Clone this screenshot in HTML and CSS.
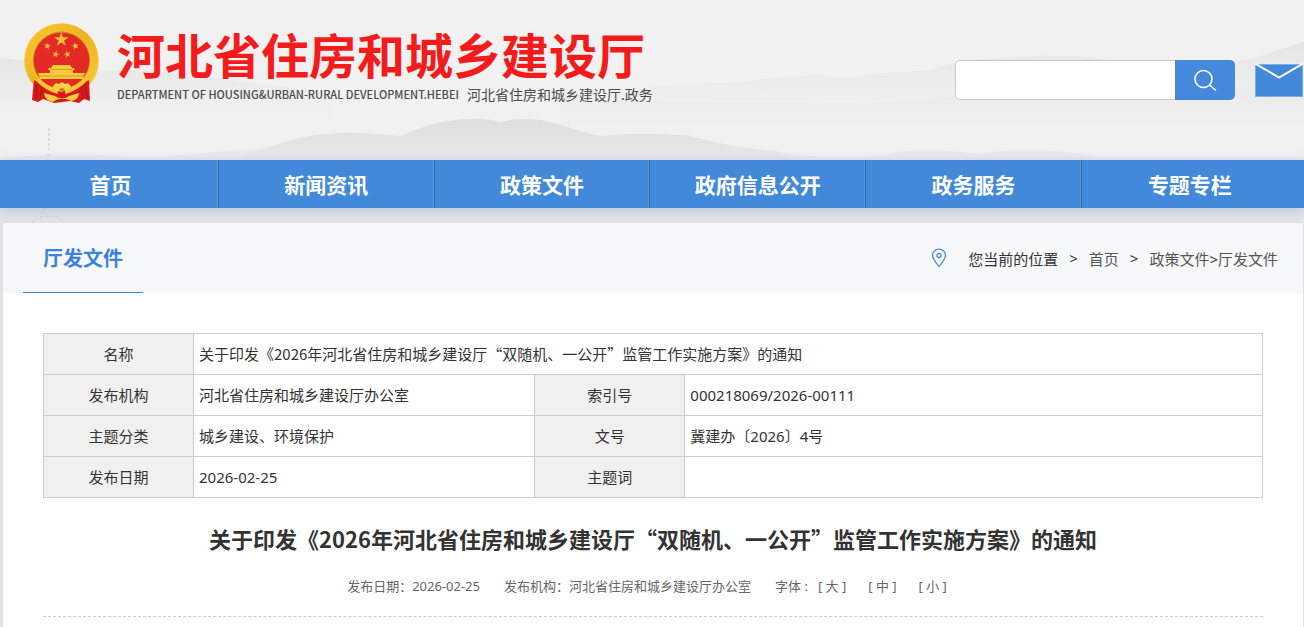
FILE: index.html
```
<!DOCTYPE html>
<html lang="zh-CN">
<head>
  <meta charset="UTF-8">
  <meta name="viewport" content="width=device-width, initial-scale=1">
  <title>关于印发《2026年河北省住房和城乡建设厅“双随机、一公开”监管工作实施方案》的通知</title>
  <link rel="stylesheet" href="styles.css">
</head>
<body>

  <!-- mountains behind the header -->
  <svg class="page-bg" viewBox="0 0 1304 627" preserveAspectRatio="xMidYMin slice" aria-hidden="true">
    <defs>
      <linearGradient id="far" x1="0" y1="0" x2="0" y2="1">
        <stop offset="0" stop-color="#e5e5e5"/>
        <stop offset="1" stop-color="#f0f0f0" stop-opacity="0"/>
      </linearGradient>
      <linearGradient id="near" gradientUnits="userSpaceOnUse" x1="0" y1="118" x2="0" y2="165">
        <stop offset="0" stop-color="#dedede"/>
        <stop offset="1" stop-color="#e9e9e9"/>
      </linearGradient>
    </defs>
    <path fill="url(#far)" d="M0 58 C30 60 60 68 100 72 C150 66 180 76 230 80 C270 86 300 88 330 92 V135 H0Z"/>
    <path fill="url(#far)" d="M560 98 C610 90 650 86 700 84 C750 82 780 76 815 75 C835 77 845 79 860 76 C885 71 910 72 930 70 C945 65 955 62 975 60 C1010 58 1040 54 1080 56 C1120 62 1160 68 1190 66 C1240 66 1270 52 1304 42 V140 H560Z"/>
    <path fill="url(#far)" opacity=".6" d="M560 104 C640 98 720 104 800 102 C880 106 930 98 1000 92 C1100 98 1200 90 1304 84 V140 H560Z"/>
    <path fill="#ebebeb" d="M0 158 C60 152 100 154 150 158 C200 152 240 152 270 146 C290 140 305 135 330 134 C360 131 380 134 400 136 H688 C710 142 740 148 775 151 C810 158 850 158 885 155 C915 148 940 150 980 154 C1020 147 1060 150 1100 157 H1304 V230 H0Z"/>
    <path fill="url(#near)" d="M240 158 C280 142 305 135 330 134 C360 131 380 136 400 136 C425 126 440 120 470 119 C485 118 495 121 500 122 C510 119 525 118 540 120 C565 124 580 133 602 136 C625 133 660 134 688 135 C710 142 740 148 775 151 L800 165 H240Z"/>
    <rect y="205" width="1304" height="422" fill="#e6e6e6"/>
    <path class="pagoda" d="M49 128 V150 M47 155 H52 M45 207 L42 214 M32 223 C37 214 60 214 65 223"/>
  </svg>

  <header class="header">
    <a class="logo" href="#">
      <svg class="emblem" viewBox="0 0 75 80" role="img" aria-label="国徽">
        <defs>
          <linearGradient id="gold" x1="0" y1="0" x2="1" y2="1">
            <stop offset="0" stop-color="#f9cf35"/>
            <stop offset="0.5" stop-color="#f0b423"/>
            <stop offset="1" stop-color="#fbd540"/>
          </linearGradient>
          <path id="star" d="M0 -10 L2.3 -3.1 L9.5 -3.1 L3.7 1.2 L5.9 8.1 L0 3.9 L-5.9 8.1 L-3.7 1.2 L-9.5 -3.1 L-2.3 -3.1Z"/>
        </defs>
        <circle cx="37.5" cy="37.5" r="37.3" fill="url(#gold)"/>
        <circle cx="37.5" cy="37.5" r="33" fill="none" stroke="#dc9b1b" stroke-width="5" stroke-dasharray="1 2" opacity=".25"/>
        <circle cx="37.5" cy="37" r="28.5" fill="#c98a1c"/>
        <circle cx="37.5" cy="37.5" r="27.8" fill="#e42a24"/>
        <g fill="#f3bd3a">
          <use href="#star" transform="translate(37.3 16.5) scale(.76)"/>
          <use href="#star" transform="translate(23.3 23) rotate(12) scale(.38)"/>
          <use href="#star" transform="translate(51.3 23) rotate(-12) scale(.38)"/>
          <use href="#star" transform="translate(31.7 31.3) rotate(12) scale(.38)"/>
          <use href="#star" transform="translate(43.3 31.3) rotate(-12) scale(.38)"/>
        </g>
        <path fill="#f8cb39" d="M29 42 H46 L48 45 H50 L51 47 H49 V50 H61 L59 56 H16 L14 50 H26 V47 H24 L25 45 H27Z"/>
        <path stroke="#d58a20" stroke-width=".8" d="M27 46.5 H48 M15 53 H60"/>
        <path fill="#d7191c" d="M10 57 L28 66 L37 69 L47 66 L65 57 L66 78 L60 76 L55 80 L46 78 L30 80 L19 76 L14 79 L8 77Z"/>
        <path fill="none" stroke="#9f1016" stroke-width=".8" d="M13 61 L12 77 M18 64 L16 76 M61 61 L63 76 M57 64 L60 76"/>
        <path fill="none" stroke="#f6c634" stroke-width="4" d="M13 56 C20 64 27 67 34 69 M62 56 C55 64 48 67 41 69"/>
        <path fill="#fad344" d="M29 63 L32 60 L35 61 L38 59 L41 61 L44 60 L47 63 L44 68 H32Z"/>
        <path fill="#df7b20" d="M35 68 A3 3 0 0 1 41 68Z"/>
        <path fill="#f9cd3c" d="M20 70 L31 73 C35 76 41 76 45 73 L55 70 C55 74 52 78 47 78 C41 75 34 75 29 79 C23 78 21 75 20 70Z"/>
      </svg>
      <span class="logo-text">
        <strong class="logo-name">河北省住房和城乡建设厅</strong>
        <span class="logo-sub">
          <span class="logo-en">DEPARTMENT OF HOUSING&amp;URBAN-RURAL DEVELOPMENT.HEBEI</span>
          <span class="logo-cn">河北省住房和城乡建设厅.政务</span>
        </span>
      </span>
    </a>

    <div class="tools">
      <form class="search" onsubmit="return false">
        <input class="search-input" type="text" aria-label="搜索">
        <button class="search-btn" type="submit" aria-label="搜索">
          <svg width="24" height="24" viewBox="0 0 24 24" fill="none" stroke="#fff" stroke-width="1.6">
            <circle cx="10.5" cy="11" r="8.5"/>
            <path d="M16.5 17 L23 22.5"/>
          </svg>
        </button>
      </form>
      <a class="mail" href="#" aria-label="邮箱">
        <svg width="48" height="36" viewBox="0 0 48 36">
          <path fill="#4289da" stroke="#79afea" d="M.5 2.5 H47.5 V34.5 H.5Z"/>
          <path fill="none" stroke="#fff" stroke-width="2" d="M0 1.5 L24 15.5 L48 1.5"/>
        </svg>
      </a>
    </div>
  </header>

  <nav class="nav">
    <ul class="nav-list">
      <li><a href="#">首页</a></li>
      <li><a href="#">新闻资讯</a></li>
      <li><a href="#">政策文件</a></li>
      <li><a href="#">政府信息公开</a></li>
      <li><a href="#">政务服务</a></li>
      <li><a href="#">专题专栏</a></li>
    </ul>
  </nav>

  <main class="content">
    <div class="content-head">
      <h2 class="column-name cn">厅发文件</h2>
      <div class="position">
        <svg class="pin" width="16" height="20" viewBox="0 0 16 20" fill="none" stroke="#4b8fdf" stroke-width="1.3">
          <path d="M8 18.5 C5 14.5 1.5 11 1.5 7.5 A6.5 6.3 0 0 1 14.5 7.5 C14.5 11 11 14.5 8 18.5Z"/>
          <circle cx="8" cy="7.5" r="2"/>
        </svg>
        <span>您当前的位置</span>
        <span>&gt;</span>
        <a href="#">首页</a>
        <span>&gt;</span>
        <span><a href="#">政策文件</a>&gt;<a href="#">厅发文件</a></span>
      </div>
    </div>

    <article class="article">
      <table class="info">
        <tr>
          <th scope="row">名称</th>
          <td class="cn" colspan="3">关于印发《2026年河北省住房和城乡建设厅“双随机、一公开”监管工作实施方案》的通知</td>
        </tr>
        <tr>
          <th scope="row">发布机构</th>
          <td class="info-left">河北省住房和城乡建设厅办公室</td>
          <th scope="row">索引号</th>
          <td>000218069/2026-00111</td>
        </tr>
        <tr>
          <th scope="row">主题分类</th>
          <td>城乡建设、环境保护</td>
          <th scope="row">文号</th>
          <td>冀建办〔2026〕4号</td>
        </tr>
        <tr>
          <th scope="row">发布日期</th>
          <td>2026-02-25</td>
          <th scope="row">主题词</th>
          <td></td>
        </tr>
      </table>

      <h1 class="title cn">关于印发《2026年河北省住房和城乡建设厅“双随机、一公开”监管工作实施方案》的通知</h1>

      <div class="meta">
        <span>发布日期：2026-02-25</span>
        <span>发布机构：河北省住房和城乡建设厅办公室</span>
        <span class="font-size">
          字体 :
          <button type="button">[ 大 ]</button>
          <button type="button">[ 中 ]</button>
          <button type="button">[ 小 ]</button>
        </span>
      </div>
    </article>
  </main>

</body>
</html>
```
FILE: styles.css
```
* {
  box-sizing: border-box;
}

body {
  margin: 0;
  min-height: 100vh;
  display: flex;
  flex-direction: column;
  background: #f1f1f1;
  color: #333;
  font-family: "Noto Sans", "Noto Sans CJK SC", sans-serif;
  font-size: 15px;
}

a {
  color: inherit;
  text-decoration: none;
}

button {
  border: 0;
  padding: 0;
  background: none;
  color: inherit;
  font: inherit;
  cursor: pointer;
}

.cn {
  font-family: "Noto Sans CJK SC", sans-serif;
}

.page-bg {
  position: absolute;
  top: 0;
  left: 0;
  width: 100%;
  height: 100%;
  z-index: -1;
}

.pagoda {
  fill: none;
  stroke: #dcdcdc;
  stroke-width: 2;
  stroke-dasharray: 3 2;
}

/* header */
.header {
  display: flex;
  justify-content: space-between;
  height: 160px;
  padding: 0 1px 0 24px;
}

.logo {
  display: flex;
  gap: 18px;
  padding-top: 23px;
}

.emblem {
  width: 75px;
  height: 80px;
}

.logo-text {
  display: flex;
  flex-direction: column;
  gap: 4px;
  font-family: "Noto Sans CJK SC", sans-serif;
}

.logo-name {
  color: #f31b1b;
  font-size: 48px;
  font-weight: bold;
  line-height: 60px;
  white-space: nowrap;
}

.logo-sub {
  display: flex;
  gap: 8px;
  align-items: center;
  color: #4a4a4a;
  line-height: 14px;
  white-space: nowrap;
}

.logo-en {
  font-size: 11px;
  font-weight: 500;
}

.logo-cn {
  font-size: 14px;
}

.tools {
  display: flex;
  gap: 20px;
  align-items: flex-start;
  padding-top: 60px;
}

.search {
  display: flex;
}

.search-input {
  width: 220px;
  height: 40px;
  padding: 0 10px;
  border: 1px solid #c8c8c8;
  border-right: 0;
  border-radius: 5px 0 0 5px;
  background: #fff;
  font-size: 15px;
  outline: none;
}

.search-btn {
  display: flex;
  align-items: center;
  justify-content: center;
  width: 60px;
  height: 40px;
  border-radius: 0 5px 5px 0;
  background: #4589dc;
}

.mail {
  padding-top: 2px;
}

.mail svg {
  display: block;
}

/* nav */
.nav {
  background: #4289da;
  box-shadow: 0 3px 12px rgba(66, 120, 200, 0.3);
}

.nav-list {
  display: flex;
  margin: 0 1px 0 3px;
  padding: 0;
  list-style: none;
}

.nav-list li {
  width: 16.6%;
  border-right: 1px solid #2f66ab;
  box-shadow: inset -1px 0 #5b9ce6;
}

.nav-list li:last-child {
  border-right: 0;
  box-shadow: none;
}

.nav-list a {
  display: block;
  color: #fff;
  font-family: "Noto Sans CJK SC", sans-serif;
  font-size: 21px;
  font-weight: bold;
  line-height: 48px;
  text-align: center;
}

/* content */
.content {
  flex: 1;
  margin: 15px 1px 0 3px;
  background: #fff;
  box-shadow: 0 0 8px rgba(0, 0, 0, 0.05);
}

.content-head {
  display: flex;
  justify-content: space-between;
  height: 70px;
  padding: 0 25px 0 20px;
  background: #f7f8fa;
}

.column-name {
  width: 120px;
  margin: 0;
  border-bottom: 1px solid #3c82dc;
  color: #3c82dc;
  font-size: 20px;
  line-height: 70px;
  text-align: center;
}

.position {
  display: flex;
  align-items: center;
  gap: 11px;
}

.position a {
  color: #555;
}

.pin {
  margin-right: 10px;
}

.article {
  padding: 40px;
}

.info {
  width: 100%;
  border-collapse: collapse;
}

.info th,
.info td {
  height: 41px;
  padding: 0 5px;
  border: 1px solid #ccc;
  line-height: 22px;
  text-align: left;
}

.info th {
  width: 150px;
  background: #f0f0f0;
  font-weight: normal;
  text-align: center;
}

.info-left {
  width: 28%;
}

.title {
  margin: 22px 0 0;
  font-size: 22px;
  line-height: 36px;
  text-align: center;
}

.meta {
  display: flex;
  justify-content: center;
  gap: 24px;
  padding: 20px 0;
  border-bottom: 1px dashed #ccc;
  color: #666;
  font-size: 13px;
  line-height: 20px;
}

.font-size {
  display: flex;
  gap: 10px;
}

.font-size button {
  margin-right: 12px;
}
```
